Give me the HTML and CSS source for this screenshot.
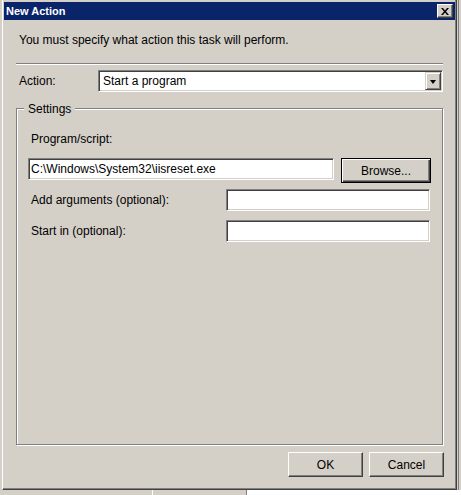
FILE: index.html
```html
<!DOCTYPE html>
<html lang="en">
<head>
    <meta charset="UTF-8">
    <title>New Action</title>
    <link rel="stylesheet" href="styles.css">
</head>
<body>
    <div class="desktop">
        <div class="edge-left"></div>
        <div class="dialog">
            <div class="titlebar">
                <span class="title">New Action</span>
                <button class="close-btn" type="button">
                    <svg width="8" height="7" viewBox="0 0 8 7">
                        <path d="M0 0h2l2 2.5L6 0h2L5 3.5L8 7H6L4 4.5L2 7H0l3-3.5z" fill="#000"/>
                    </svg>
                </button>
            </div>
            <div class="dialog-body">
                <p class="intro">You must specify what action this task will perform.</p>
                <div class="separator"></div>

                <div class="action-row">
                    <label class="action-label">Action:</label>
                    <div class="combo">
                        <span class="combo-text">Start a program</span>
                        <span class="combo-arrow"><span class="triangle"></span></span>
                    </div>
                </div>

                <div class="group">
                    <span class="group-title">Settings</span>
                    <label class="field-label">Program/script:</label>
                    <div class="program-row">
                        <input class="textbox program-input" type="text" value="C:\Windows\System32\iisreset.exe">
                        <button class="btn btn-default" type="button">Browse...</button>
                    </div>
                    <div class="field-row">
                        <label class="row-label">Add arguments (optional):</label>
                        <input class="textbox field-input" type="text">
                    </div>
                    <div class="field-row field-row-last">
                        <label class="row-label">Start in (optional):</label>
                        <input class="textbox field-input" type="text">
                    </div>
                </div>

                <div class="dialog-buttons">
                    <button class="btn" type="button">OK</button>
                    <button class="btn" type="button">Cancel</button>
                </div>
            </div>
        </div>
        <div class="edge-right"></div>
    </div>
    <div class="bottom-strip">
        <div class="strip-a"></div>
        <div class="strip-b"></div>
        <div class="strip-c"></div>
    </div>
</body>
</html>
```

FILE: styles.css
```css
* {
    margin: 0;
    padding: 0;
    box-sizing: border-box;
}

body {
    font-family: 'Liberation Sans', Arial, sans-serif;
    font-size: 12px;
    line-height: 15px;
    color: #000;
    background: #d4d0c8;
    width: 461px;
    height: 495px;
    overflow: hidden;
}

/* Surroundings of the window */
.desktop {
    display: flex;
    height: 490px;
}

.edge-left {
    width: 2px;
    background: #d4d0c8;
}

.edge-right {
    flex: 1;
    border-left: 1px solid #d4d0c8;
    box-shadow: inset 1px 0 0 #808080;
    background: #d4d0c8;
}

.bottom-strip {
    display: flex;
    height: 5px;
}

.strip-a {
    width: 153px;
    background: #d4d0c8;
    border-right: 1px solid #fff;
}

.strip-b {
    width: 94px;
    background: #d4d0c8;
    border-right: 1px solid #808080;
}

.strip-c {
    flex: 1;
    background: #fff;
}

/* Window frame */
.dialog {
    width: 455px;
    height: 491px;
    margin-top: -1px;
    background: #d4d0c8;
    border: 1px solid;
    border-color: #fff #404040 #404040 #fff;
    box-shadow: inset -1px -1px 0 #808080;
    padding: 1px;
    display: flex;
    flex-direction: column;
}

.titlebar {
    height: 18px;
    margin-top: 1px;
    background: #0a246a;
    display: flex;
    align-items: center;
    justify-content: space-between;
    padding: 0 2px;
}

.title {
    color: #fff;
    font-weight: bold;
    font-size: 11px;
    line-height: 18px;
}

.close-btn {
    width: 16px;
    height: 14px;
    background: #d4d0c8;
    border: 1px solid;
    border-color: #fff #404040 #404040 #fff;
    box-shadow: inset -1px -1px 0 #808080;
    display: flex;
    align-items: center;
    justify-content: center;
}

.close-btn svg {
    display: block;
}

.dialog-body {
    padding: 0 12px;
    display: flex;
    flex-direction: column;
}

.intro {
    margin-top: 13px;
    padding-left: 3px;
}

.separator {
    margin-top: 15px;
    border-top: 1px solid #808080;
    border-bottom: 1px solid #fff;
}

/* Action combo */
.action-row {
    margin-top: 5px;
    height: 22px;
    display: flex;
    align-items: center;
    padding-left: 3px;
}

.action-label {
    width: 79px;
}

.combo {
    flex: 1;
    height: 22px;
    background: #fff;
    border: 1px solid;
    border-color: #808080 #fff #fff #808080;
    box-shadow: inset 1px 1px 0 #404040, inset -1px -1px 0 #d4d0c8;
    display: flex;
    align-items: center;
    padding: 1px 1px 1px 4px;
}

.combo-text {
    flex: 1;
}

.combo-arrow {
    width: 16px;
    height: 18px;
    background: #d4d0c8;
    border: 1px solid;
    border-color: #d4d0c8 #404040 #404040 #d4d0c8;
    box-shadow: inset 1px 1px 0 #fff, inset -1px -1px 0 #808080;
    display: flex;
    align-items: center;
    justify-content: center;
}

.triangle {
    width: 0;
    height: 0;
    border-left: 3.5px solid transparent;
    border-right: 3.5px solid transparent;
    border-top: 4px solid #000;
    margin-top: 1px;
}

/* Settings group */
.group {
    position: relative;
    margin-top: 16px;
    height: 337px;
    border: 1px solid #808080;
    box-shadow: 1px 1px 0 #fff, inset 1px 1px 0 #fff;
    padding: 23px 11px 0 11px;
    display: flex;
    flex-direction: column;
}

.group-title {
    position: absolute;
    top: -7px;
    left: 7px;
    padding: 0 4px;
    background: #d4d0c8;
}

.field-label {
    padding-left: 3px;
}

.program-row {
    margin-top: 11px;
    display: flex;
    align-items: flex-start;
    gap: 7px;
}

.textbox {
    height: 22px;
    background: #fff;
    border: 1px solid;
    border-color: #808080 #fff #fff #808080;
    box-shadow: inset 1px 1px 0 #404040, inset -1px -1px 0 #d4d0c8;
    font-family: inherit;
    font-size: 12px;
    line-height: 15px;
    color: #000;
    padding: 0 2px;
    outline: none;
}

.program-input {
    flex: 1;
    min-width: 0;
}

.field-row {
    margin-top: 6px;
    display: flex;
    align-items: center;
}

.field-row-last {
    margin-top: 9px;
}

.row-label {
    width: 198px;
    padding-left: 3px;
}

.field-input {
    width: 204px;
}

/* Buttons */
.btn {
    width: 75px;
    height: 25px;
    font-family: inherit;
    font-size: 12px;
    color: #000;
    background: #d4d0c8;
    border: 1px solid;
    border-color: #fff #404040 #404040 #fff;
    box-shadow: inset -1px -1px 0 #808080;
}

.btn-default {
    width: 90px;
    border: 1px solid #000;
    box-shadow: inset 1px 1px 0 #fff, inset -1px -1px 0 #404040, inset -2px -2px 0 #808080;
}

.dialog-buttons {
    margin-top: 7px;
    display: flex;
    justify-content: flex-end;
    gap: 6px;
    margin-right: -1px;
}
```
